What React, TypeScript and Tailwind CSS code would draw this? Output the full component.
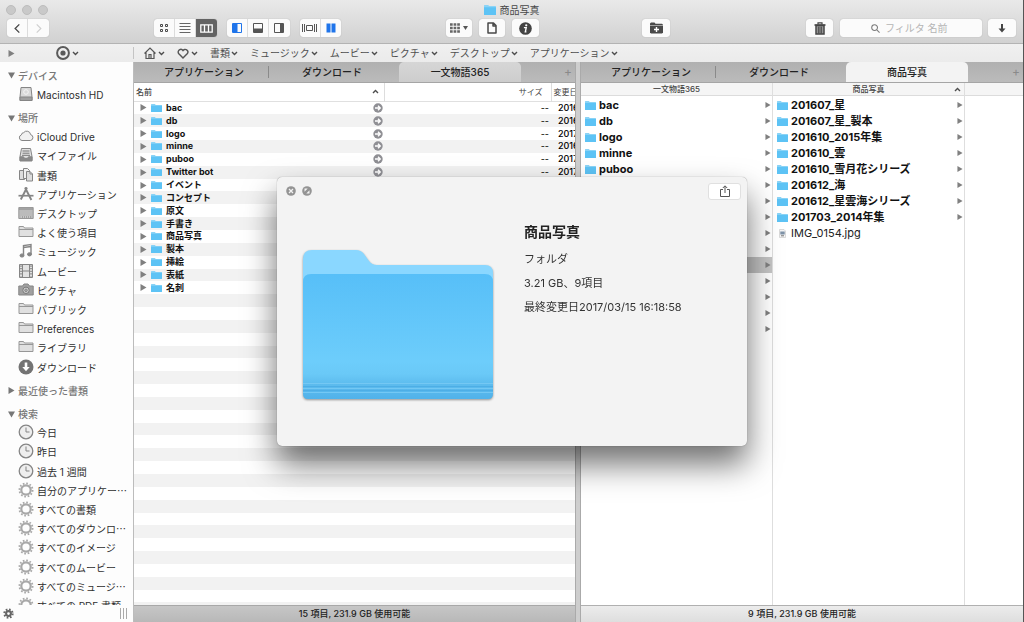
import React from "react";

type IconName =
  | "disk" | "cloud" | "files" | "docs" | "apps" | "desktop" | "folder" | "music"
  | "movie" | "camera" | "download" | "clock" | "gear";

const FONT = "font-['Inter','Noto_Sans_CJK_JP',sans-serif]";

const devices: [IconName, string][] = [["disk", "Macintosh HD"]];
const places: [IconName, string][] = [
  ["cloud", "iCloud Drive"],
  ["files", "マイファイル"],
  ["docs", "書類"],
  ["apps", "アプリケーション"],
  ["desktop", "デスクトップ"],
  ["folder", "よく使う項目"],
  ["music", "ミュージック"],
  ["movie", "ムービー"],
  ["camera", "ピクチャ"],
  ["folder", "パブリック"],
  ["folder", "Preferences"],
  ["folder", "ライブラリ"],
  ["download", "ダウンロード"],
];
const searches: [IconName, string][] = [
  ["clock", "今日"],
  ["clock", "昨日"],
  ["clock", "過去 1 週間"],
  ["gear", "自分のアプリケー…"],
  ["gear", "すべての書類"],
  ["gear", "すべてのダウンロ…"],
  ["gear", "すべてのイメージ"],
  ["gear", "すべてのムービー"],
  ["gear", "すべてのミュージ…"],
  ["gear", "すべての PDF 書類"],
];
const folders: [string, string][] = [
  ["bac", "2016"], ["db", "2016"], ["logo", "2017"], ["minne", "2016"], ["puboo", "2017"],
  ["Twitter bot", "2017"], ["イベント", "2017"], ["コンセプト", "2017"], ["原文", "2017"],
  ["手書き", "2017"], ["商品写真", "2017"], ["製本", "2017"], ["挿絵", "2017"],
  ["表紙", "2017"], ["名刺", "2017"],
];
const photos = [
  "201607_星", "201607_星_製本", "201610_2015年集", "201610_雲", "201610_雪月花シリーズ",
  "201612_海", "201612_星雲海シリーズ", "201703_2014年集",
];
const favorites = ["書類", "ミュージック", "ムービー", "ピクチャ", "デスクトップ", "アプリケーション"];
const TOTAL_ROWS = 40;

function Gear({ className }: { className: string }) {
  return (
    <svg viewBox="0 0 16 16" className={className} fill="none" stroke="currentColor" aria-hidden="true">
      <circle cx="8" cy="8" r="4.700" strokeWidth="2.200" />
      <circle cx="8" cy="8" r="6.600" strokeWidth="1.800" strokeDasharray="1.700 1.756" />
    </svg>
  );
}

function SideIcon({ name }: { name: IconName }) {
  if (name === "gear") return <Gear className="mb-[2px] size-4 shrink-0 text-[#a8a8a8]" />;
  const p = { fill: "none", stroke: "#858585", strokeWidth: 1 };
  return (
    <svg viewBox="0 0 16 16" className="mb-[2px] size-4 shrink-0" {...p} aria-hidden="true">
      {name === "disk" && (
        <>
          <path d="M3 1.500h10l1 9.500v3.500H2V11z" fill="#d9d9d9" />
          <path d="M2 11h12v3.500H2z" fill="#a0a0a0" />
          <circle cx="8" cy="6" r="2.300" stroke="#f4f4f4" />
        </>
      )}
      {name === "cloud" && (
        <path d="M4 12.500a2.900 2.900 0 0 1-.6-5.650A2.300 2.300 0 0 1 5.600 4.700a3.900 3.900 0 0 1 7 1.900 3 3 0 0 1-.3 5.900z" fill="#f1f1f1" />
      )}
      {name === "files" && (
        <>
          <path d="M3.500 1.500h9l1.500 8v4H2v-4z" fill="#e2e2e2" />
          <path d="M4.500 4h7M4.500 6.200h7M4 8.300h8" stroke="#777" />
          <path d="M2 9.800h3.500l1 1.500h3l1-1.500H14v4.200H2z" fill="#8a8a8a" />
        </>
      )}
      {name === "docs" && (
        <>
          <path d="M1.500 3.500h5v9h-5z" fill="#ddd" />
          <path d="M5.500 1.500h4l2 2v8h-6z" fill="#f1f1f1" />
          <path d="M8.500 4.500h3.500l2.500 2.500v7h-6zM12 4.500V7h2.500" fill="#ddd" />
        </>
      )}
      {name === "apps" && (
        <>
          <path d="M9 1.500 2.800 13.500M7 1.500l6.400 12.500" strokeWidth="1.900" />
          <path d="M.5 9.700h15" strokeWidth="1.700" />
        </>
      )}
      {name === "desktop" && (
        <>
          <path d="M.8 2.500h14.400v11H.8z" fill="#bbb" stroke="#999" />
          <path d="M1 4h14M3 12h10" stroke="#888" />
          <path d="M3 12h10" strokeDasharray="1 1" stroke="#eee" />
        </>
      )}
      {name === "folder" && (
        <path d="M1 12.500v-10h4.500l1 1.500H15v8.500zM1 5.500h14" fill="#e0e0e0" stroke="#979797" />
      )}
      {name === "music" && (
        <>
          <path d="M5.500 12V2.500l7.500-1V11M5.500 4.500l7.500-1" strokeWidth="1.400" />
          <ellipse cx="4" cy="12.500" rx="2" ry="1.600" fill="#858585" />
          <ellipse cx="11.500" cy="11.300" rx="2" ry="1.600" fill="#858585" />
        </>
      )}
      {name === "movie" && (
        <>
          <path d="M1.500 1.500h13v13h-13z" fill="#e2e2e2" />
          <path d="M4.500 1.500v13M11.500 1.500v13M4.500 8h7" />
          <path d="M3 2.500v11M13 2.500v11" strokeDasharray="1.200 1.400" strokeWidth="1.600" />
        </>
      )}
      {name === "camera" && (
        <>
          <path d="M.8 4h3.700l1.500-2h4l1.500 2h3.700v9H.8z" fill="#a0a0a0" />
          <circle cx="8" cy="8.300" r="3.200" fill="#d2d2d2" stroke="#777" />
          <circle cx="8" cy="8.300" r="1.300" fill="#aaa" stroke="#888" />
        </>
      )}
      {name === "download" && (
        <>
          <circle cx="8" cy="8" r="7.500" fill="#737373" stroke="none" />
          <path d="M8 3.500V9" stroke="#fff" strokeWidth="2.600" />
          <path d="M4.300 8h7.400L8 12.300z" fill="#fff" stroke="none" />
        </>
      )}
      {name === "clock" && (
        <>
          <circle cx="8" cy="8" r="6.800" fill="#eee" strokeWidth="1.300" />
          <path d="M8 3.500V8h3.500" />
        </>
      )}
    </svg>
  );
}

function FolderGlyph({ className = "w-[11px] h-[9px]" }: { className?: string }) {
  return (
    <svg viewBox="0 0 11 9" preserveAspectRatio="none" className={`shrink-0 ${className}`} aria-hidden="true">
      <path d="M0 .5Q0 0 .5 0h3.300l1 1h5.700q.5 0 .5.500v7q0 .5-.5.500H.5Q0 9 0 8.500z" fill="#8ad3f6" />
      <path d="M0 2h11v6.500q0 .5-.5.500H.5Q0 9 0 8.500z" fill="#5dc3f5" />
    </svg>
  );
}

function Triangle({ down = false, className = "size-[7px] text-[#808080]" }: { down?: boolean; className?: string }) {
  return (
    <svg viewBox="0 0 7 7" className={`shrink-0 ${className}`} fill="currentColor" aria-hidden="true">
      <path d={down ? "M0 .5h7L3.500 6.500z" : "M.5 0v7l6-3.500z"} />
    </svg>
  );
}

function Chevron({ up = false }: { up?: boolean }) {
  return (
    <svg viewBox="0 0 7 5" className="h-[5px] w-[7px] shrink-0" fill="none" stroke="#4d4d4d" strokeWidth="1.400" aria-hidden="true">
      <path d={up ? "M1 4l2.500-2.500L6 4" : "M1 1l2.500 2.500L6 1"} />
    </svg>
  );
}

function ToolButton({ label, className, children }: { label: string; className: string; children: React.ReactNode }) {
  return (
    <button
      type="button"
      aria-label={label}
      className={`flex h-[18px] items-center justify-center text-[#4a4a4a] ${className}`}
    >
      {children}
    </button>
  );
}

const single = "rounded-[3px] bg-[#fbfbfb] shadow-[0_0_1px_#0000004d]";
const group = "flex divide-x divide-[#dcdcdc] overflow-hidden rounded-[3px] bg-[#fbfbfb] shadow-[0_0_1px_#0000004d]";

function Toolbar() {
  return (
    <header className="flex h-[44px] shrink-0 flex-col border-b border-[#b3b3b3] bg-linear-to-b from-[#e9e9e9] to-[#d1d1d1]">
      <div className="grid h-[19px] grid-cols-[1fr_auto_1fr] items-center px-[6px]">
        <div className="flex gap-[6px]">
          {["閉じる", "しまう", "拡大"].map((l) => (
            <button key={l} type="button" aria-label={l} className="size-[10px] rounded-full border border-[#bdbdbd] bg-[#c9c9c9]" />
          ))}
        </div>
        <h1 className="flex items-center gap-1 text-[10px] leading-[14px] text-[#484848]">
          <FolderGlyph className="h-[10px] w-[12px]" />
          商品写真
        </h1>
      </div>
      <div className="flex items-center px-[7px]">
        <div className={group}>
          <ToolButton label="戻る" className="w-[21px]">
            <svg viewBox="0 0 8 12" className="h-[11px] w-[8px]" fill="none" stroke="currentColor" strokeWidth="1.500"><path d="M6.500 1.500 2 6l4.500 4.500" /></svg>
          </ToolButton>
          <ToolButton label="進む" className="w-[21px]">
            <svg viewBox="0 0 8 12" className="h-[11px] w-[8px]" fill="none" stroke="#cfcfcf" strokeWidth="1.300"><path d="M1.500 1.500 6 6l-4.500 4.500" /></svg>
          </ToolButton>
        </div>
        <div className="flex-[105]" />
        <div className={group}>
          <ToolButton label="アイコン表示" className="w-[21px]">
            <svg viewBox="0 0 10 10" className="size-[10px]" fill="none" stroke="currentColor"><path d="M1.500 1.500h2v2h-2zM6.500 1.500h2v2h-2zM1.500 6.500h2v2h-2zM6.500 6.500h2v2h-2z" /></svg>
          </ToolButton>
          <ToolButton label="リスト表示" className="w-[21px]">
            <svg viewBox="0 0 12 10" className="h-[10px] w-[12px]" stroke="#666"><path d="M.5 .5h11M.5 3.500h11M.5 6.500h11M.5 9.500h11" /></svg>
          </ToolButton>
          <ToolButton label="カラム表示" className="w-[21px] bg-[#636363]">
            <svg viewBox="0 0 13 9" className="h-[9px] w-[13px]" fill="none" stroke="#fff" strokeWidth="1.300"><path d="M.8.8h11.400v7.400H.8zM4.500.8v7.400M8.500.8v7.400" /></svg>
          </ToolButton>
        </div>
        <div className={`${group} ml-[10px]`}>
          <ToolButton label="左パネル" className="w-[21px]">
            <svg viewBox="0 0 10 10" className="size-[10px]" fill="none" stroke="#1f74ea"><path d="M.5.5h9v9h-9z" /><path d="M1 1h4v8H1z" fill="#1f74ea" /></svg>
          </ToolButton>
          <ToolButton label="下パネル" className="w-[21px]">
            <svg viewBox="0 0 10 10" className="size-[10px]" fill="none" stroke="#555"><path d="M.5.5h9v9h-9z" /><path d="M1 6h8v3H1z" fill="#555" /></svg>
          </ToolButton>
          <ToolButton label="右パネル" className="w-[21px]">
            <svg viewBox="0 0 10 10" className="size-[10px]" fill="none" stroke="#555"><path d="M.5.500h9v9h-9z" /><path d="M6.500 1H9v8H6.500z" fill="#555" /></svg>
          </ToolButton>
        </div>
        <div className={`${group} ml-[10px]`}>
          <ToolButton label="カバー表示" className="w-[21px]">
            <svg viewBox="0 0 15 8" className="h-[8px] w-[15px]" fill="none" stroke="#555"><path d="M.5 0v8M2.500 0v8M4.500 1.500h6v5h-6zM12.500 0v8M14.500 0v8" /></svg>
          </ToolButton>
          <ToolButton label="デュアル表示" className="w-[20px]">
            <svg viewBox="0 0 10 10" className="size-[10px]" fill="#1f74ea"><path d="M.5.5h4v9h-4zM5.500.5h4v9h-4z" /></svg>
          </ToolButton>
        </div>
        <div className="flex-[105]" />
        <ToolButton label="並び替え" className={`${single} w-[26px] gap-[3px]`}>
          <svg viewBox="0 0 10 10" className="size-[10px]" fill="none" stroke="#666"><path d="M0 1.500h10M0 5h10M0 8.500h10" strokeWidth="2.400" strokeDasharray="2.700 .9" /></svg>
          <svg viewBox="0 0 5 4" className="h-[4px] w-[5px]" fill="#555"><path d="M0 0h5L2.500 4z" /></svg>
        </ToolButton>
        <ToolButton label="新規書類" className={`${single} ml-[7px] w-[26px]`}>
          <svg viewBox="0 0 10 12" className="h-[12px] w-[10px]" fill="none" stroke="currentColor" strokeWidth="1.500"><path d="M1 1h5.500L9 3.500V11H1zM6 1v3h3" strokeLinejoin="round" /></svg>
        </ToolButton>
        <ToolButton label="情報を見る" className={`${single} ml-[7px] w-[27px]`}>
          <svg viewBox="0 0 14 14" className="size-[13px]"><circle cx="7" cy="7" r="6.800" fill="#444" /><circle cx="7.800" cy="3.600" r="1.200" fill="#fff" /><path d="M5.300 6h2.500L6.800 10.600h1.200" fill="none" stroke="#fff" strokeWidth="1.500" /></svg>
        </ToolButton>
        <div className="flex-[104]" />
        <ToolButton label="新規フォルダ" className={`${single} w-[28px]`}>
          <svg viewBox="0 0 13 12" className="h-[12px] w-[13px]"><path d="M0 3V1.500L1 .5h3.500l1 1.300H12l1 1V3z" fill="#4a4a4a" /><path d="M0 3.600h13V10.500l-1 1H1l-1-1z" fill="#4a4a4a" /><path d="M6.500 5v5M4 7.500h5" stroke="#fff" strokeWidth="1.400" /></svg>
        </ToolButton>
        <div className="flex-[136]" />
        <ToolButton label="ゴミ箱" className={`${single} w-[27px]`}>
          <svg viewBox="0 0 12 13" className="h-[13px] w-[12px]" fill="none" stroke="#444"><path d="M.5 3h11" strokeWidth="1.600" /><path d="M4 2.500V.8h4v1.700" strokeWidth="1.200" /><path d="M2 3.500h8V12H2z" fill="#a8a8a8" strokeWidth="1.500" /><path d="M4.300 4.500v7M6 4.500v7M7.700 4.500v7" /></svg>
        </ToolButton>
        <label className={`${single} ml-[7px] flex h-[18px] w-[142px] items-center justify-center gap-[5px]`}>
          <svg viewBox="0 0 10 10" className="size-[9px] shrink-0" fill="none" stroke="#7c7c7c" strokeWidth="1.200"><circle cx="4" cy="4" r="3.200" /><path d="M6.500 6.500 9.500 9.500" /></svg>
          <input aria-label="フィルタ" placeholder="フィルタ 名前" className="w-[66px] bg-transparent text-[10px] leading-[14px] outline-none placeholder:text-[#b4b4b4]" />
        </label>
        <ToolButton label="ダウンロード" className={`${single} ml-[6px] w-[28px]`}>
          <svg viewBox="0 0 8 9" className="h-[9px] w-[8px]"><path d="M4 0v6" stroke="#444" strokeWidth="2" /><path d="M.5 4.500h7L4 8.500z" fill="#444" /></svg>
        </ToolButton>
      </div>
    </header>
  );
}

function FavoritesBar() {
  return (
    <nav className="flex h-[18px] shrink-0 items-center bg-linear-to-b from-[#f0f0f0] to-[#ebebeb] text-[10px] leading-[14px] text-[#4f4f4f]">
      <div className="flex h-[12px] w-[134px] shrink-0 items-center border-r border-[#c4c4c4] pl-[8px]">
        <button type="button" aria-label="サイドバーを開く"><Triangle /></button>
        <button type="button" aria-label="表示" className="ml-[41px] flex items-center gap-[2px]">
          <svg viewBox="0 0 14 14" className="size-[14px]"><circle cx="7" cy="7" r="5.900" fill="none" stroke="#5a5a5a" strokeWidth="2" /><circle cx="7" cy="7" r="2.600" fill="#5a5a5a" /></svg>
          <Chevron />
        </button>
      </div>
      <div className="flex items-center gap-[12px] pl-[10px]">
        <button type="button" aria-label="ホーム" className="flex items-center gap-[2px]">
          <svg viewBox="0 0 12 12" className="size-[12px]" fill="none" stroke="#555" strokeWidth="1.200"><path d="M.5 6.500 6 1l5.500 5.500M2 5.500v6h8v-6M5 11.500V7.500h2v4" /></svg>
          <Chevron />
        </button>
        <button type="button" aria-label="お気に入り" className="flex items-center gap-[2px]">
          <svg viewBox="0 0 12 11" className="h-[11px] w-[12px]" fill="none" stroke="#555" strokeWidth="1.400"><path d="M6 10 1.600 5.500A2.600 2.600 0 0 1 6 2.600a2.600 2.600 0 0 1 4.400 2.900z" /></svg>
          <Chevron />
        </button>
        {favorites.map((f) => (
          <button key={f} type="button" className="flex items-center gap-px whitespace-nowrap">
            {f}
            <Chevron />
          </button>
        ))}
      </div>
    </nav>
  );
}

function SideHeading({ label, open = true, first = false }: { label: string; open?: boolean; first?: boolean }) {
  return (
    <h2 className={`flex min-h-0 flex-1 items-center gap-[3px] pl-[8px] font-medium text-[#777] ${first ? "" : "mt-[4px]"}`}>
      <Triangle down={open} className="size-[7px] text-[#777]" />
      {label}
    </h2>
  );
}

function SideItems({ items }: { items: [IconName, string][] }) {
  return (
    <ul className="contents">
      {items.map(([icon, label]) => (
        <li key={label} className="flex min-h-0 flex-1 items-center pl-[18px]">
          <a href="#" className="flex items-center gap-[3px] whitespace-nowrap text-[#2e2e2e]">
            <SideIcon name={icon} />
            <span>
              {label.replace("…", "")}
              {label.endsWith("…") && <span className="font-['Noto_Sans_CJK_JP',sans-serif]">…</span>}
            </span>
          </a>
        </li>
      ))}
    </ul>
  );
}

function Sidebar() {
  return (
    <aside className="flex w-[134px] shrink-0 flex-col border-r border-[#bcbcbc] bg-[#fdfdfd]">
      <div className="min-h-0 flex-1 overflow-hidden">
        <nav className="flex h-[102%] flex-col pt-[4px] text-[10px] leading-[16px]">
          <SideHeading label="デバイス" first />
          <SideItems items={devices} />
          <SideHeading label="場所" />
          <SideItems items={places} />
          <SideHeading label="最近使った書類" open={false} />
          <SideHeading label="検索" />
          <SideItems items={searches} />
        </nav>
      </div>
      <div className="flex h-[17px] shrink-0 items-center justify-between pr-[6px] pl-[3px]">
        <button type="button" aria-label="設定">
          <svg viewBox="0 0 16 16" className="size-[11px]" fill="none" stroke="#666" aria-hidden="true">
            <circle cx="8" cy="8" r="3.500" strokeWidth="3" />
            <circle cx="8" cy="8" r="6" strokeWidth="3" strokeDasharray="2.400 2.312" />
          </svg>
        </button>
        <div className="flex h-[11px] gap-[2px]">
          <span className="w-px bg-[#aaa]" />
          <span className="w-px bg-[#aaa]" />
          <span className="w-px bg-[#aaa]" />
        </div>
      </div>
    </aside>
  );
}

function Tabs({ active, activeClass }: { active: string; activeClass: string }) {
  const plain = "flex items-center justify-center";
  return (
    <div className="flex h-[21px] shrink-0 border-b border-[#a5a5a5] bg-linear-to-b from-[#b0b0b0] to-[#bbb] text-[10px] leading-[14px] font-medium text-[#222]" role="tablist">
      <button type="button" role="tab" className={`${plain} w-[134px] pl-[6px]`}>アプリケーション</button>
      <span className="my-[4px] w-px bg-[#8a8a8a]" />
      <button type="button" role="tab" className={`${plain} w-[130px] pr-[4px]`}>ダウンロード</button>
      <button type="button" role="tab" aria-selected="true" className={`${plain} w-[122px] rounded-t-[5px] ${activeClass}`}>{active}</button>
      <button type="button" aria-label="新規タブ" className="ml-auto pr-[3px] text-[12px] font-normal text-[#8a8a8a]">+</button>
    </div>
  );
}

function ListPane() {
  const rows = Array.from({ length: TOTAL_ROWS }, (_, i) => folders[i]);
  return (
    <section className="flex min-w-0 flex-[441] flex-col">
      <Tabs active="一文物語365" activeClass="bg-linear-to-b from-[#d6d6d6] to-[#cdcdcd]" />
      <div className="min-h-0 flex-1 overflow-hidden bg-white">
        <table className="h-[102%] w-full table-fixed border-collapse text-[9px] leading-[12px]">
          <thead>
            <tr className="h-[18px] border-b border-[#e0e0e0] text-left text-[8px] text-[#444]">
              <th className="p-0 font-medium">
                <span className="flex items-center justify-between pr-[5px] pl-[2px]">名前<Chevron up /></span>
              </th>
              <th className="w-[167px] border-l border-[#ddd] p-0 pr-[8px] text-right font-normal">サイズ</th>
              <th className="w-[24px] overflow-hidden border-l border-[#ddd] p-0 pl-[2px] font-normal whitespace-nowrap">変更日</th>
            </tr>
          </thead>
          <tbody>
            {rows.map((row, i) => (
              <tr key={i} className="even:bg-[#f2f2f2]">
                <td className="p-0">
                  {row ? (
                    <span className="flex h-[12px] items-center pr-px pl-[6px] font-bold text-[#111]">
                      <Triangle />
                      <FolderGlyph className="ml-[4px] h-[8px] w-[11px]" />
                      <span className="ml-[4px] flex-1">{row[0]}</span>
                      <svg viewBox="0 0 10 10" className="size-[10px]"><circle cx="5" cy="5" r="4.700" fill="#8f8f94" /><path d="M2 5h5M5 2.700 7.300 5 5 7.300" fill="none" stroke="#fff" strokeWidth="1.300" /></svg>
                    </span>
                  ) : (
                    <span className="block h-[12px]" />
                  )}
                </td>
                <td className="p-0 pr-[2px] text-right">{row ? "--" : ""}</td>
                <td className="overflow-hidden p-0 pl-[7px] font-medium whitespace-nowrap">{row ? row[1] : ""}</td>
              </tr>
            ))}
          </tbody>
        </table>
      </div>
      <footer className="flex h-[17px] shrink-0 items-center justify-center border-t border-[#a8a8a8] bg-linear-to-b from-[#c6c6c6] to-[#b8b8b8] text-[9px] leading-[14px] font-medium text-[#222]">
        15 項目, 231.9 GB 使用可能
      </footer>
    </section>
  );
}

function ColumnRow({ name, selected = false }: { name: string; selected?: boolean }) {
  return (
    <li className={`flex h-[16px] items-center pr-px pl-[4px] font-bold text-[#111] ${selected ? "bg-[#c4c4c4]" : ""}`}>
      <FolderGlyph />
      <span className="ml-[3px] flex-1 whitespace-nowrap">{name}</span>
      <Triangle className="size-[6px] text-[#808080]" />
    </li>
  );
}

function ColumnPane() {
  const head = "mb-px h-[13px] items-center border-b border-[#dcdcdc] bg-[#f5f5f5] text-[8px] leading-[12px] font-medium text-[#444]";
  return (
    <section className="flex min-w-0 flex-[442] flex-col">
      <Tabs active="商品写真" activeClass="bg-[#f3f3f3]" />
      <div className="flex min-h-0 flex-1 bg-white text-[11px] leading-[16px]">
        <div className="w-[192px] shrink-0 border-r border-[#dedede]">
          <h3 className={`${head} flex justify-center`}>一文物語365</h3>
          <ul>
            {folders.map(([name]) => (
              <ColumnRow key={name} name={name} selected={name === "商品写真"} />
            ))}
          </ul>
        </div>
        <div className="w-[192px] shrink-0 border-r border-[#dedede]">
          <h3 className={`${head} grid grid-cols-[1fr_auto_1fr]`}>
            <span className="col-start-2">商品写真</span>
            <span className="justify-self-end pr-[3px]"><Chevron up /></span>
          </h3>
          <ul>
            {photos.map((name) => (
              <ColumnRow key={name} name={name} />
            ))}
            <li className="flex h-[16px] items-center pl-[6px] text-[#222]">
              <svg viewBox="0 0 7 9" className="h-[9px] w-[7px]"><path d="M.5.500h4.500l1.500 1.500v6.500h-6z" fill="#f5f5f5" stroke="#ccc" strokeWidth=".7" /><path d="M1.300 2.500h4.400v3H1.300z" fill="#7f93a8" /><path d="M2 6.800h3" stroke="#777" /></svg>
              <span className="ml-[5px]">IMG_0154.jpg</span>
            </li>
          </ul>
        </div>
        <div className="min-w-0 flex-1">
          <div className={head} />
        </div>
      </div>
      <footer className="flex h-[17px] shrink-0 items-center justify-center border-t border-[#b0b0b0] bg-linear-to-b from-[#ececec] to-[#dedede] text-[9px] leading-[14px] font-medium text-[#222]">
        9 項目, 231.9 GB 使用可能
      </footer>
    </section>
  );
}

function BigFolder() {
  return (
    <svg viewBox="0 0 190 150" className="h-[150px] w-[190px] shrink-0 drop-shadow-[0_1px_1px_#00000066]" aria-hidden="true">
      <defs>
        <linearGradient id="front" x1="0" y1="0" x2="0" y2="1">
          <stop offset="0" stopColor="#57bff8" />
          <stop offset="0.700" stopColor="#6dcdfb" />
          <stop offset="0.800" stopColor="#6ac9f7" />
          <stop offset="0.880" stopColor="#5dbcee" />
          <stop offset="1" stopColor="#51b2ea" />
        </linearGradient>
      </defs>
      <path d="M0 140V9Q0 0 9 0H53q5 0 8 4l5 7q3 4 8 4H182q8 0 8 8v117z" fill="#8ad7ff" />
      <path d="M0 32q0-8 8-8H182q8 0 8 8V144q0 5-5 5H5q-5 0-5-5z" fill="url(#front)" />
      <path d="M0 133.500h190M0 138.500h190M0 142.500h190" stroke="#74c8f4" />
      <path d="M0 136.500h190M0 140.500h190" stroke="#4daee6" />
    </svg>
  );
}

function QuickLook() {
  return (
    <div className="pointer-events-none fixed inset-0 flex items-center justify-center">
      <div
        role="dialog"
        aria-label="商品写真"
        className="pointer-events-auto flex w-[470px] flex-col rounded-[5px] bg-[#f3f3f3] px-[6px] pt-[6px] pb-[46px] shadow-[0_0_1px_#00000080,0_18px_32px_#00000090]"
      >
        <div className="flex items-start justify-between">
          <div className="flex gap-[6px] pt-[3px] pl-[3px]">
            <button type="button" aria-label="閉じる">
              <svg viewBox="0 0 10 10" className="size-[10px]"><circle cx="5" cy="5" r="4.800" fill="#949494" /><path d="M3 3l4 4M7 3 3 7" stroke="#f3f3f3" strokeWidth="1.300" /></svg>
            </button>
            <button type="button" aria-label="フルスクリーン">
              <svg viewBox="0 0 10 10" className="size-[10px]"><circle cx="5" cy="5" r="4.800" fill="#949494" /><path d="M2.500 2.500h3.200L2.500 5.700zM7.500 7.500H4.300l3.200-3.200z" fill="#f3f3f3" /></svg>
            </button>
          </div>
          <button type="button" aria-label="共有" className="flex h-[17px] w-[33px] items-center justify-center rounded-[3px] border border-[#e0e0e0] bg-white">
            <svg viewBox="0 0 10 12" className="h-[12px] w-[10px]" fill="none" stroke="#555"><path d="M3 4.500H.5v7h9v-7H7M5 8V1M2.800 3 5 .8 7.200 3" /></svg>
          </button>
        </div>
        <div className="flex gap-[31px] pt-[22px] pl-[20px]">
          <div className="pt-[28px]">
            <BigFolder />
          </div>
          <div className="flex flex-col gap-[8px] text-[11px] leading-[16px] text-[#333]">
            <h2 className="mb-px text-[14px] leading-[20px] font-bold text-[#222]">商品写真</h2>
            <p>フォルダ</p>
            <p>3.21 GB、9項目</p>
            <p>最終変更日2017/03/15 16:18:58</p>
          </div>
        </div>
      </div>
    </div>
  );
}

export default function App() {
  return (
    <div className={`flex h-screen flex-col overflow-hidden border-r border-[#555] bg-white ${FONT}`}>
      <Toolbar />
      <FavoritesBar />
      <main className="flex min-h-0 flex-1">
        <Sidebar />
        <ListPane />
        <div className="w-[6px] shrink-0 border-x border-[#aaa] bg-[#cecece]" />
        <ColumnPane />
      </main>
      <QuickLook />
    </div>
  );
}
